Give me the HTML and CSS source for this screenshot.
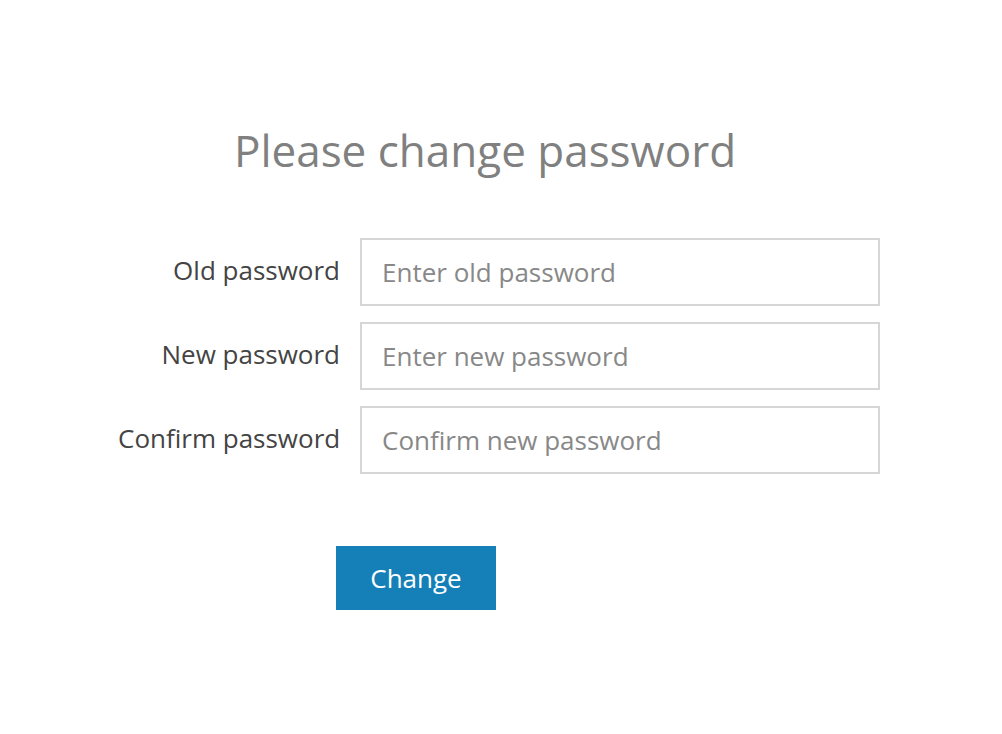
FILE: index.html
```html
<!DOCTYPE html>
<html lang="en">

<head>
    <meta charset="UTF-8">
    <meta name="viewport" content="width=device-width, initial-scale=1.0">
    <title>Change password</title>
    <link rel="stylesheet" href="styles.css">
</head>

<body>
    <div id="page">
        <h1 class="title">Please change password</h1>
        <form class="pwd-form">
            <label class="label" for="old">Old password</label>
            <input class="field" id="old" type="password" placeholder="Enter old password">
            <label class="label" for="new">New password</label>
            <input class="field" id="new" type="password" placeholder="Enter new password">
            <label class="label" for="confirm">Confirm password</label>
            <input class="field" id="confirm" type="password" placeholder="Confirm new password">
        </form>
        <button class="btn" type="button">Change</button>
    </div>
</body>

</html>
```

FILE: styles.css
```css
* {
    margin: 0;
    padding: 0;
    box-sizing: border-box;
}

body {
    font-family: "Open Sans", "Liberation Sans", sans-serif;
    background-color: #fff;
}

#page {
    padding-top: 118px;
}

.title {
    width: 970px;
    font-size: 44px;
    font-weight: 400;
    line-height: 64px;
    color: #808080;
    text-align: center;
}

.pwd-form {
    display: grid;
    grid-template-columns: 222px 520px;
    column-gap: 20px;
    row-gap: 16px;
    align-items: center;
    margin-top: 56px;
    margin-left: 118px;
}

.label {
    font-size: 26px;
    color: #444;
    text-align: right;
    white-space: nowrap;
    padding-bottom: 4px;
}

.field {
    height: 68px;
    border: 2px solid #d6d6d6;
    padding: 0 20px;
    font-family: inherit;
    font-size: 26px;
    color: #444;
    outline: none;
}

.field::placeholder {
    color: #888;
}

.btn {
    display: block;
    width: 160px;
    height: 64px;
    margin-top: 72px;
    margin-left: 336px;
    border: none;
    background-color: #1580b8;
    color: #fff;
    font-family: inherit;
    font-size: 26px;
}
```
